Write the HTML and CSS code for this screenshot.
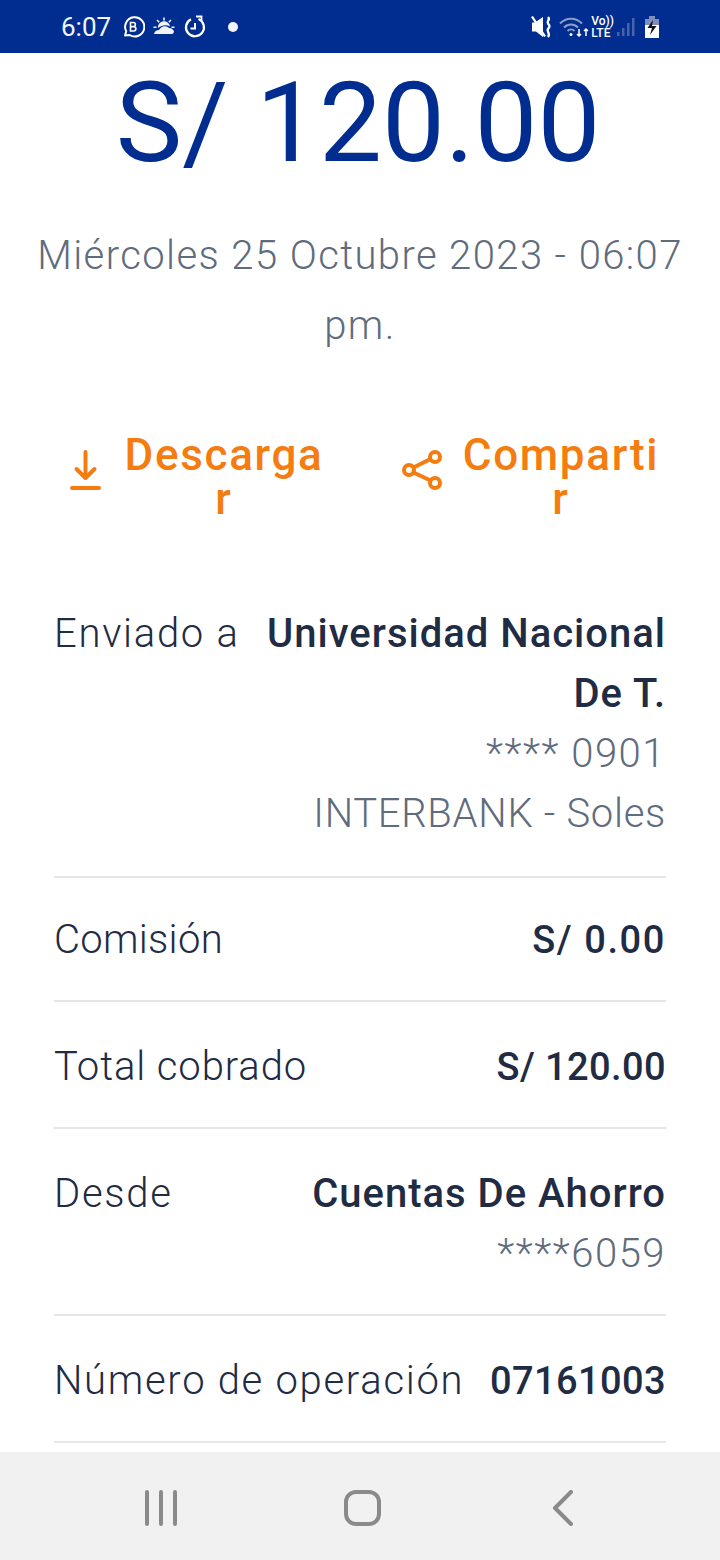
FILE: index.html
```html
<!DOCTYPE html>
<html lang="es">
<head>
    <meta charset="UTF-8">
    <meta name="viewport" content="width=device-width, initial-scale=1.0">
    <title>Constancia</title>
    <link rel="stylesheet" href="styles.css">
</head>
<body>
    <div class="phone">
        <header class="status-bar">
            <div class="status-left">
                <span class="clock">6:07</span>
                <svg class="ic" width="24" height="24" viewBox="0 0 24 24" fill="none" stroke="#fff" stroke-width="2"><path d="M4 20.500l1.200-4.200A9.600 9.600 0 1 1 8.600 20z" stroke-linejoin="round"/><path d="M9.500 7.500v8.500h3.200a2.200 2.200 0 0 0 0-4.400H9.500h2.800a2 2 0 0 0 0-4.100z" stroke-width="1.600"/></svg>
                <svg class="ic" width="24" height="24" viewBox="0 0 24 24" fill="#f2f2f8"><path d="M2 19c.5-2.500 2.500-4 5-4 2-4 7-5 10-2 2.500 0 4.500 1.600 5 3.500-.2 1.200-1 2.500-2 2.500z"/><path d="M6 13a6 6 0 0 1 12-1.500C15 9.500 10 10 6 13zM11.200 2.500h1.600v3h-1.600zM4.500 5.500l1.200-1 2 2.200-1.200 1zM18.300 4.500l1.200 1-2 2.200-1.200-1zM1.500 11.500h3v1.500h-3zM19.500 11.500h3v1.500h-3z"/></svg>
                <svg class="ic" width="24" height="24" viewBox="0 0 24 24" fill="none" stroke="#fff" stroke-width="2.200"><path d="M15.500 4A9 9 0 1 1 8 4.200"/><path d="M12 8v5.500H7.500" stroke-width="2"/><path d="M13 1.500h5.500V6" stroke-width="1.800"/></svg>
                <span class="dot"></span>
            </div>
            <div class="status-right">
                <svg width="23" height="26" viewBox="0 0 23 26" fill="#fff"><path d="M1 8.500h3L12 3v20l-7-5.500H1z"/><path d="M0 3l2-1 13 20-2 1z"/><path d="M17 3c3 3-2 4 0 6.500s2 3 0 5.500 3 4 0 8" fill="none" stroke="#fff" stroke-width="2.400"/></svg>
                <svg class="wifi" width="31" height="24" viewBox="0 0 31 24" fill="none" stroke="#8b9cc9" stroke-width="2"><path d="M1 8.500c6-6.500 16-6.500 22 0"/><path d="M5 12.500c4-4 10-4 14 0"/><path d="M8.500 16c2-2 5-2 7 0"/><circle cx="12" cy="19.500" r="1.500" fill="#fff" stroke="none"/><path d="M20 14v7M18 19l2 2 2-2M27 21v-7M25 16l2-2 2 2" stroke="#fff" stroke-width="1.500"/></svg>
                <span class="volte">Vo))<br>LTE</span>
                <svg class="signal" width="18" height="24" viewBox="0 0 18 24" fill="#4a63a8"><rect x="0" y="17" width="2.500" height="4"/><rect x="5" y="13" width="2.500" height="8"/><rect x="10" y="8" width="2.500" height="13"/><rect x="15" y="3" width="2.500" height="18"/></svg>
                <svg class="battery" width="16" height="24" viewBox="0 0 16 24"><path d="M5 1h6v3h4v19H1V4h4z" fill="#7f8fbd"/><path d="M1 10h14v13H1z" fill="#fff"/><path d="M9 5L3.500 13H8l-2 7 6.500-9H8z" fill="#111"/></svg>
            </div>
        </header>

        <main class="content">
            <h1 class="amount">S/ 120.00</h1>
            <p class="date">Miércoles 25 Octubre 2023 - 06:07 pm.</p>

            <div class="actions">
                <button class="action" type="button">
                    <svg width="38" height="46" viewBox="0 0 38 46" fill="none" stroke="#f57c0e" stroke-width="4" stroke-linecap="round" stroke-linejoin="round"><path d="M17.500 7v25M8.500 24l9 9 9-9"/><path d="M4 43h27"/></svg>
                    <span class="action-label">Descargar</span>
                </button>
                <button class="action" type="button">
                    <svg width="44" height="46" viewBox="0 0 44 46" fill="none" stroke="#f57c0e" stroke-width="4"><circle cx="10" cy="25" r="5"/><circle cx="36" cy="12" r="5"/><circle cx="36" cy="38" r="5"/><path d="M14.500 22.500l17-8.500M14.500 27.500l17 8"/></svg>
                    <span class="action-label">Compartir</span>
                </button>
            </div>

            <section class="details">
                <div class="row row-first">
                    <span class="row-label">Enviado a</span>
                    <div class="row-value">
                        <strong>Universidad Nacional De T.</strong>
                        <span class="muted">**** 0901</span>
                        <span class="muted soft">INTERBANK - Soles</span>
                    </div>
                </div>
                <div class="row row-short">
                    <span class="row-label label-tight">Comisión</span>
                    <div class="row-value"><strong class="num num-wide">S/ 0.00</strong></div>
                </div>
                <div class="row">
                    <span class="row-label label-mid">Total cobrado</span>
                    <div class="row-value"><strong class="num">S/ 120.00</strong></div>
                </div>
                <div class="row">
                    <span class="row-label">Desde</span>
                    <div class="row-value">
                        <strong>Cuentas De Ahorro</strong>
                        <span class="muted">****6059</span>
                    </div>
                </div>
                <div class="row">
                    <span class="row-label">Número de operación</span>
                    <div class="row-value"><strong class="num">07161003</strong></div>
                </div>
            </section>
        </main>

        <nav class="nav-bar">
            <svg width="36" height="36" viewBox="0 0 36 36" fill="none" stroke="#8a8a8a" stroke-width="4" stroke-linecap="round"><path d="M4 2v32M18 2v32M32 2v32"/></svg>
            <svg width="45" height="38" viewBox="0 0 45 38" fill="none" stroke="#8a8a8a" stroke-width="4"><rect x="4" y="3" width="33" height="32" rx="10"/></svg>
            <svg width="24" height="36" viewBox="0 0 24 36" fill="none" stroke="#8a8a8a" stroke-width="4" stroke-linecap="round" stroke-linejoin="round"><path d="M21 2L5 18l16 16"/></svg>
        </nav>
    </div>
</body>
</html>
```

FILE: styles.css
```css
body {
    margin: 0;
    padding: 0;
    font-family: Roboto, "Liberation Sans", sans-serif;
    background-color: #fff;
}
.phone {
    width: 720px;
    height: 1560px;
    display: flex;
    flex-direction: column;
    overflow: hidden;
}
.status-bar {
    height: 53px;
    flex: none;
    background-color: #002d8f;
    display: flex;
    justify-content: space-between;
    align-items: center;
    padding: 0 60px 0 61px;
}
.status-left {
    display: flex;
    align-items: center;
    gap: 7px;
    color: #f2f4fa;
}
.clock {
    font-size: 26px;
    margin-right: 3px;
}
.dot {
    width: 10px;
    height: 10px;
    border-radius: 50%;
    background-color: #f2f4fa;
    margin-left: 14px;
}
.status-right {
    display: flex;
    align-items: center;
    gap: 5px;
}
.volte {
    color: #fff;
    font-size: 12px;
    font-weight: 500;
    line-height: 12px;
    margin-left: -4px;
}
.signal {
    margin-left: -2px;
}
.battery {
    margin-left: 4px;
}
.content {
    flex: 1;
    min-height: 0;
    overflow: hidden;
    padding: 0 54px;
}
.amount {
    margin: 0 -54px;
    padding-right: 4px;
    font-size: 112px;
    font-weight: 400;
    line-height: 140px;
    color: #002d8f;
    text-align: center;
}
.date {
    margin: 28px -20px 0;
    font-size: 40px;
    line-height: 70px;
    font-weight: 300;
    letter-spacing: 1.4px;
    color: #5f6c7d;
    text-align: center;
}
.actions {
    margin-top: 72px;
    padding: 0 3px 0 14px;
    display: flex;
    justify-content: space-between;
}
.action {
    display: flex;
    align-items: flex-start;
    gap: 16px;
    background: none;
    border: none;
    padding: 0;
    font-family: inherit;
    color: #f57c0e;
}
.action svg {
    margin-top: 12px;
}
.action-label {
    width: 204px;
    font-size: 44px;
    line-height: 44px;
    font-weight: 500;
    letter-spacing: 1.7px;
    text-align: center;
    word-break: break-all;
}
.details {
    margin-top: 50px;
}
.row {
    display: flex;
    justify-content: space-between;
    gap: 24px;
    padding: 35px 0 30px;
    border-bottom: 2px solid #e4e6ea;
    font-size: 40px;
    line-height: 60px;
    letter-spacing: 1.5px;
    color: #1f2c44;
}
.row-first {
    padding: 33px 0 32px;
}
.row-short {
    padding: 32px 0 30px;
}
.row-label {
    flex: none;
    font-weight: 300;
    letter-spacing: 1.7px;
}
.label-tight {
    letter-spacing: 0.3px;
}
.label-mid {
    letter-spacing: 0.9px;
}
.row-value {
    text-align: right;
    display: flex;
    flex-direction: column;
}
.row-value strong {
    font-weight: 500;
    letter-spacing: 1px;
}
.row-value .num {
    font-size: 38px;
    letter-spacing: 0.4px;
}
.row-value .num-wide {
    letter-spacing: 1.6px;
}
.muted {
    font-weight: 300;
    color: #5f6c7d;
}
.soft {
    letter-spacing: 0.7px;
}
.nav-bar {
    height: 108px;
    flex: none;
    background-color: #f1f1f1;
    display: flex;
    align-items: center;
    gap: 163px;
    padding: 4px 0 0 143px;
    box-sizing: border-box;
}
```
